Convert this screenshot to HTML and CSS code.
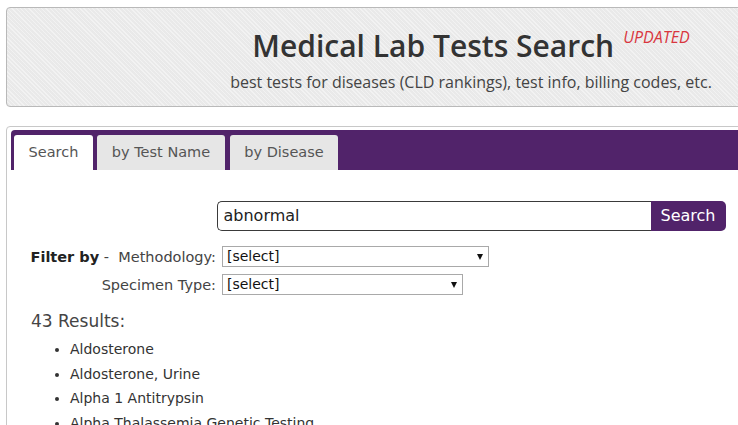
FILE: index.html
```html
<!DOCTYPE html>
<html>
<head>
<meta charset="utf-8">
<link rel="stylesheet" href="styles.css">
</head>
<body>
<div class="page">
  <div class="header">
    <h1 class="title">Medical Lab Tests Search<span class="updated">UPDATED</span></h1>
    <p class="subtitle">best tests for diseases (CLD rankings), test info, billing codes, etc.</p>
  </div>
  <div class="panel">
    <div class="tabbar">
      <div class="tab active">Search</div>
      <div class="tab name">by Test Name</div>
      <div class="tab disease">by Disease</div>
    </div>
    <div class="content">
      <div class="searchrow">
        <div class="searchbox">abnormal</div>
        <div class="searchbtn">Search</div>
      </div>
      <div class="filters">
        <div class="frow">
          <div class="flabel"><b class="fby">Filter by</b> -&nbsp; Methodology:</div>
          <div class="select wide">[select]</div>
        </div>
        <div class="frow">
          <div class="flabel">Specimen Type:</div>
          <div class="select narrow">[select]</div>
        </div>
      </div>
      <div class="results">43 Results:</div>
      <ul class="list">
        <li>Aldosterone</li>
        <li>Aldosterone, Urine</li>
        <li>Alpha 1 Antitrypsin</li>
        <li>Alpha Thalassemia Genetic Testing</li>
      </ul>
    </div>
  </div>
</div>
</body>
</html>
```

FILE: styles.css
```css
html, body {
  margin: 0;
  padding: 0;
  overflow: hidden;
  background: #fff;
}
body {
  font-family: "DejaVu Sans", Verdana, sans-serif;
  color: #333;
}
.page {
  width: 930px;
  padding: 7px 0 0 6px;
}
.header {
  box-sizing: border-box;
  height: 100px;
  border: 1px solid #b9b9b9;
  border-radius: 4px;
  background-color: #eeeeee;
  background-image: repeating-linear-gradient(45deg, rgba(255,255,255,0.25) 0 1px, rgba(0,0,0,0.02) 1px 3px);
  text-align: center;
  font-family: "Open Sans", sans-serif;
}
.title {
  margin: 0;
  padding-top: 18px;
  font-size: 30px;
  line-height: 40px;
  font-weight: 600;
  color: #333;
}
.updated {
  position: relative;
  top: -14px;
  margin-left: 9px;
  font-size: 16px;
  font-style: italic;
  font-weight: 400;
  color: #d9363e;
}
.subtitle {
  margin: -1px 0 0;
  font-size: 16px;
  line-height: 24px;
  color: #444;
}
.panel {
  margin-top: 19px;
  border: 1px solid #c8c8c8;
  border-radius: 4px;
  padding: 3px 4px;
  height: 330px;
}
.tabbar {
  display: flex;
  height: 40px;
  box-sizing: border-box;
  padding: 5px 0 0 3px;
  background: #51236a;
  border-radius: 4px 4px 0 0;
}
.tab {
  height: 35px;
  box-sizing: border-box;
  margin-right: 4px;
  line-height: 35px;
  font-size: 14.5px;
  color: #555;
  background: #e6e6e6;
  border-radius: 3px 3px 0 0;
  text-align: center;
}
.tab.active {
  background: #fff;
  width: 79px;
}
.tab.name {
  width: 128px;
  margin-right: 5px;
}
.tab.disease {
  width: 108px;
}
.content {
  padding-top: 31px;
}
.searchrow {
  display: flex;
  justify-content: center;
}
.searchbox {
  box-sizing: border-box;
  width: 434px;
  height: 30px;
  border: 1px solid #3a3a3a;
  border-right: none;
  border-radius: 5px 0 0 5px;
  padding-left: 6px;
  font-size: 16px;
  line-height: 28px;
  color: #222;
}
.searchbtn {
  box-sizing: border-box;
  width: 75px;
  height: 30px;
  background: #51236a;
  color: #fff;
  border-radius: 0 5px 5px 0;
  font-size: 16px;
  line-height: 30px;
  text-align: center;
}
.filters {
  margin-top: 15px;
  display: flex;
  flex-direction: column;
  gap: 7px;
}
.frow {
  display: flex;
  align-items: center;
  gap: 6px;
}
.flabel {
  width: 205px;
  text-align: right;
  font-size: 14.5px;
  color: #444;
}
.fby {
  color: #222;
  font-size: 14.5px;
}
.select {
  position: relative;
  box-sizing: border-box;
  height: 21px;
  border: 1px solid #a9a9a9;
  padding-left: 4px;
  font-size: 14px;
  line-height: 19px;
  color: #111;
}
.select::after {
  content: "";
  position: absolute;
  right: 5px;
  top: 7px;
  border-left: 3.5px solid transparent;
  border-right: 3.5px solid transparent;
  border-top: 6px solid #111;
}
.wide {
  width: 267px;
}
.narrow {
  width: 241px;
}
.results {
  margin: 15px 0 0 20px;
  font-size: 17px;
  line-height: 22px;
  color: #444;
}
.list {
  margin: 5px 0 0;
  padding-left: 59px;
  font-size: 14px;
  line-height: 24.5px;
  color: #333;
}
```
